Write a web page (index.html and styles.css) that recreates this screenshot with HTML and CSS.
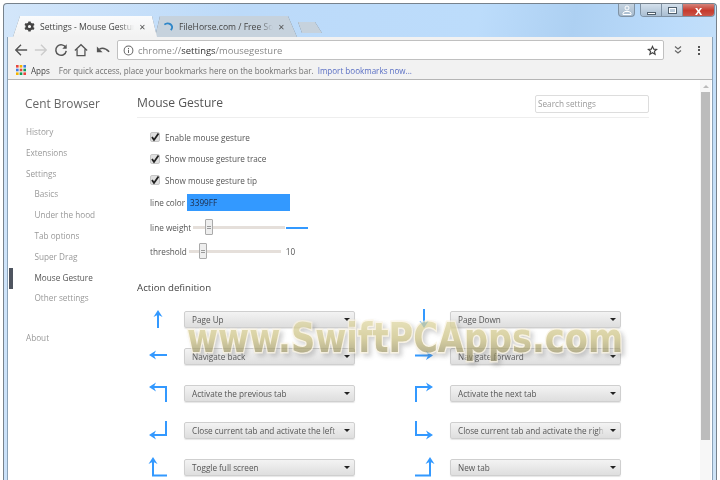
FILE: index.html
```html
<!doctype html>
<html>
  <head>
    <meta charset="UTF-8" />
    <title>Settings - Mouse Gesture</title>
    <link rel="stylesheet" href="styles.css">
  </head>
  <body>
    <div class="window">
      <!-- caption -->
      <div class="caption">
        <div class="tabs">
          <div class="tab tab-active">
            <svg class="tab-icon" viewBox="0 0 24 24" fill="#444"><path d="M20.500 13.500a8.500 8.500 0 0 0 0-3l2.500-2-2.500-4.300-3 1.200a8.500 8.500 0 0 0-2.500-1.500L14.500 1h-5L9 3.900a8.500 8.500 0 0 0-2.500 1.500l-3-1.200L1 8.500l2.500 2a8.500 8.500 0 0 0 0 3l-2.500 2 2.500 4.300 3-1.200A8.500 8.500 0 0 0 9 20.100l.5 2.900h5l.5-2.900a8.500 8.500 0 0 0 2.500-1.500l3 1.200 2.500-4.300ZM12 15.500a3.500 3.500 0 1 1 0-7 3.500 3.500 0 0 1 0 7Z"/></svg>
            <span class="tab-title">Settings - Mouse Gesture</span>
            <span class="tab-close">&#x2715;</span>
          </div>
          <div class="tab tab-back">
            <svg class="tab-icon" viewBox="0 0 24 24" fill="none" stroke="#2f86c8" stroke-width="4"><path d="M3 8a10 9 0 0 1 17 5q0 4-3 7"/></svg>
            <span class="tab-title">FileHorse.com / Free Software Download</span>
            <span class="tab-close">&#x2715;</span>
          </div>
          <div class="tab-new"></div>
        </div>
        <div class="caption-buttons">
          <div class="caption-user">
            <svg viewBox="0 0 12 10" width="12" height="10" fill="none" stroke="#fff" stroke-width="1"><circle cx="6" cy="3" r="2"/><path d="M2 9.500V8l2-1.500h4L10 8v1.500Z"/></svg>
          </div>
          <div class="caption-group">
            <div class="caption-min"><span class="min-bar"></span></div>
            <div class="caption-max"><span class="max-box"></span></div>
            <div class="caption-close">x</div>
          </div>
        </div>
      </div>

      <div class="frame">
        <!-- toolbar -->
        <div class="toolbar">
          <svg class="tool" viewBox="0 0 16 16" fill="none" stroke="#555" stroke-width="1.600"><path d="M15 8H2M8 2 2 8l6 6"/></svg>
          <svg class="tool" viewBox="0 0 16 16" fill="none" stroke="#ccc" stroke-width="1.600"><path d="M1 8h13M8 2l6 6-6 6"/></svg>
          <svg class="tool" viewBox="0 0 16 16" fill="none" stroke="#555" stroke-width="1.700"><path d="M13.500 5.500A6 6 0 1 0 14 9"/><path d="M14.500 1.500v5h-5" fill="#555" stroke="none"/></svg>
          <svg class="tool" viewBox="0 0 16 16" fill="none" stroke="#555" stroke-width="1.500"><path d="M1 8.500 8 2l7 6.500M3.500 7v7.500h9V7"/></svg>
          <svg class="tool tool-undo" viewBox="0 0 16 16" fill="none" stroke="#555" stroke-width="1.900"><path d="M4 7q5-3 11 3"/><path d="M1 4v6.500h6.500Z" fill="#555" stroke="none"/></svg>
          <div class="omnibox">
            <svg class="omni-info" viewBox="0 0 12 12" fill="none" stroke="#666" stroke-width="1.100"><circle cx="6" cy="6" r="4.800"/><path d="M6 5.200v3.600M6 3.200v1.100"/></svg>
            <span class="omni-url"><span class="omni-dim">chrome://</span>settings<span class="omni-dim">/mousegesture</span></span>
            <svg class="omni-star" viewBox="0 0 16 16" fill="none" stroke="#444" stroke-width="1.700"><path d="m8 2 1.800 4 4.200.4-3.200 2.800 1 4.300L8 11.300l-3.800 2.200 1-4.300L2 6.400 6.200 6Z"/></svg>
          </div>
          <svg class="tool-small" viewBox="0 0 10 10" fill="none" stroke="#666" stroke-width="1.200"><path d="m2 1.500 3 2.500 3-2.500M2 5.500 5 8l3-2.500"/></svg>
          <div class="menu-dots"><span></span><span></span><span></span></div>
        </div>
        <!-- bookmarks -->
        <div class="bookmarks">
          <svg class="apps-icon" viewBox="0 0 10 10">
            <rect width="2.600" height="2.600" fill="#e8453c"/><rect x="3.700" width="2.600" height="2.600" fill="#f4b400"/><rect x="7.400" width="2.600" height="2.600" fill="#3f7de0"/>
            <rect y="3.700" width="2.600" height="2.600" fill="#3f7de0"/><rect x="3.700" y="3.700" width="2.600" height="2.600" fill="#e8453c"/><rect x="7.400" y="3.700" width="2.600" height="2.600" fill="#0f9d58"/>
            <rect y="7.400" width="2.600" height="2.600" fill="#f4b400"/><rect x="3.700" y="7.400" width="2.600" height="2.600" fill="#0f9d58"/><rect x="7.400" y="7.400" width="2.600" height="2.600" fill="#e8453c"/>
          </svg>
          <span class="apps-label">Apps</span>
          <span class="bookmarks-hint">For quick access, place your bookmarks here on the bookmarks bar.</span>
          <span class="bookmarks-link">Import bookmarks now...</span>
        </div>

        <div class="page">
          <!-- sidebar -->
          <div class="sidebar">
            <div class="sidebar-title">Cent Browser</div>
            <ul class="nav">
              <li>History</li>
              <li>Extensions</li>
              <li>Settings</li>
              <li class="nav-sub">Basics</li>
              <li class="nav-sub">Under the hood</li>
              <li class="nav-sub">Tab options</li>
              <li class="nav-sub">Super Drag</li>
              <li class="nav-sub nav-selected">Mouse Gesture</li>
              <li class="nav-sub">Other settings</li>
              <li class="nav-about">About</li>
            </ul>
          </div>

          <!-- main -->
          <div class="main">
            <div class="main-header">
              <div class="main-title">Mouse Gesture</div>
              <div class="search">Search settings</div>
            </div>

            <div class="options">
              <div class="check-row"><span class="check"><svg viewBox="0 0 10 10"><path d="M2 5l2 3 4.500-6.500" fill="none" stroke="#222" stroke-width="1.800"/></svg></span>Enable mouse gesture</div>
              <div class="check-row"><span class="check"><svg viewBox="0 0 10 10"><path d="M2 5l2 3 4.500-6.500" fill="none" stroke="#222" stroke-width="1.800"/></svg></span>Show mouse gesture trace</div>
              <div class="check-row"><span class="check"><svg viewBox="0 0 10 10"><path d="M2 5l2 3 4.500-6.500" fill="none" stroke="#222" stroke-width="1.800"/></svg></span>Show mouse gesture tip</div>
              <div class="color-row">
                <span>line color</span>
                <div class="color-value">3399FF</div>
              </div>
              <div class="slider-row">
                <span>line weight</span>
                <div class="slider slider-weight"><span class="thumb"></span></div>
                <span class="weight-preview"></span>
              </div>
              <div class="slider-row">
                <span>threshold</span>
                <div class="slider slider-threshold"><span class="thumb"></span></div>
                <span class="slider-value">10</span>
              </div>
            </div>

            <div class="section-title">Action definition</div>

            <div class="actions">
              <svg class="arrow" viewBox="0 0 20 24"><path class="arrow-line" d="M10 21V6"/><path class="arrow-head" d="M10 3l4.500 7-4.500-2.200L5.500 10Z"/></svg>
              <div class="select"><span class="select-text">Page Up</span><span class="select-caret"></span></div>
              <svg class="arrow" viewBox="0 0 20 24"><path class="arrow-line" d="M10 2v16"/><path class="arrow-head" d="M10 21l-4.500-7 4.500 2.200 4.500-2.200Z"/></svg>
              <div class="select"><span class="select-text">Page Down</span><span class="select-caret"></span></div>

              <svg class="arrow" viewBox="0 0 20 24"><path class="arrow-line" d="M19 11H4"/><path class="arrow-head" d="M1 11l7-4.500L5.800 11 8 15.500Z"/></svg>
              <div class="select"><span class="select-text">Navigate back</span><span class="select-caret"></span></div>
              <svg class="arrow" viewBox="0 0 20 24"><path class="arrow-line" d="M1 11.500h15"/><path class="arrow-head" d="M19 11.500 12 7l2.200 4.500L12 16Z"/></svg>
              <div class="select"><span class="select-text">Navigate forward</span><span class="select-caret"></span></div>

              <svg class="arrow" viewBox="0 0 20 24"><path class="arrow-line" d="M18 21V6H4"/><path class="arrow-head" d="M1 6l7-4.500L5.800 6 8 10.500Z"/></svg>
              <div class="select"><span class="select-text">Activate the previous tab</span><span class="select-caret"></span></div>
              <svg class="arrow" viewBox="0 0 20 24"><path class="arrow-line" d="M2 21V6h14"/><path class="arrow-head" d="M19 6 12 1.500 14.200 6 12 10.500Z"/></svg>
              <div class="select"><span class="select-text">Activate the next tab</span><span class="select-caret"></span></div>

              <svg class="arrow" viewBox="0 0 20 24"><path class="arrow-line" d="M18 3v14H4"/><path class="arrow-head" d="M1 17l7-4.500L5.800 17 8 21.500Z"/></svg>
              <div class="select"><span class="select-text select-fade">Close current tab and activate the left one</span><span class="select-caret"></span></div>
              <svg class="arrow" viewBox="0 0 20 24"><path class="arrow-line" d="M2 3v14h14"/><path class="arrow-head" d="M19 17l-7-4.500 2.200 4.500-2.200 4.500Z"/></svg>
              <div class="select"><span class="select-text select-fade">Close current tab and activate the right one</span><span class="select-caret"></span></div>

              <svg class="arrow" viewBox="0 0 20 24"><path class="arrow-line" d="M5 5v15.500h14"/><path class="arrow-head" d="M5 2l4.500 7L5 6.800.5 9Z"/></svg>
              <div class="select"><span class="select-text">Toggle full screen</span><span class="select-caret"></span></div>
              <svg class="arrow" viewBox="0 0 20 24"><path class="arrow-line" d="M1 20.500h15V5"/><path class="arrow-head" d="M16 2l4.500 7-4.500-2.200L11.500 9Z"/></svg>
              <div class="select"><span class="select-text">New tab</span><span class="select-caret"></span></div>
            </div>
          </div>

          <!-- scrollbar -->
          <div class="scrollbar">
            <span class="scroll-arrow"></span>
            <div class="scroll-thumb"></div>
          </div>
        </div>
      </div>
    </div>

    <!-- watermark -->
    <svg class="watermark" viewBox="0 0 450 70">
      <defs>
        <linearGradient id="wm-fill" x1="0" y1="0" x2="0" y2="1">
          <stop offset="0" stop-color="#e6dfae"/>
          <stop offset="0.5" stop-color="#cbc184"/>
          <stop offset="1" stop-color="#86805c"/>
        </linearGradient>
      </defs>
      <text class="watermark-text" x="3" y="49" textLength="436" lengthAdjust="spacingAndGlyphs">www.SwiftPCApps.com</text>
    </svg>
  </body>
</html>
```

FILE: styles.css
```css
body {
  margin: 0;
  width: 720px;
  height: 480px;
  overflow: hidden;
  position: relative;
  background: #fff;
  font-family: 'Open Sans', 'Noto Sans', sans-serif;
  font-size: 8.2px;
  color: #555;
}

/* start */
.window {
  margin: 3px 3px 0 3px;
  height: 477px;
  box-sizing: border-box;
  display: flex;
  flex-direction: column;
  border: 1px solid #77828c;
  border-bottom: none;
  border-radius: 4px 4px 0 0;
  overflow: hidden;
  background: linear-gradient(100deg, #d3e6fa 0%, #bcdaf9 30%, #bcdcfb 60%, #add0f2 72%, #bcdcfb 85%, #cfe4f7 100%);
  filter: blur(0.45px);
}

/* caption */
.caption {
  height: 33px;
  flex: none;
  display: flex;
  justify-content: space-between;
  align-items: flex-start;
  padding: 0 1px 0 9px;
}
.tabs {
  align-self: flex-end;
  display: flex;
  align-items: flex-end;
  filter: drop-shadow(0 0 0.6px #5f7282);
}
.tab {
  height: 21px;
  box-sizing: border-box;
  display: flex;
  align-items: center;
  font-size: 8.6px;
  color: #444;
}
.tab-active {
  width: 144px;
  margin-right: -2px;
  padding: 0 11px;
  background: linear-gradient(#fafbfc, #f2f2f2);
  clip-path: polygon(0 100%, 7px 0, 139px 0, 100% 100%);
  position: relative;
  z-index: 1;
}
.tab-back {
  width: 142px;
  padding: 0 12px 0 8px;
  background: #c6d2dd;
  clip-path: polygon(0 100%, 5px 0, 133px 0, 100% 100%);
}
.tab-icon {
  width: 11px;
  height: 11px;
  flex: none;
  margin-right: 5px;
}
.tab-title {
  flex: 1;
  min-width: 0;
  overflow: hidden;
  white-space: nowrap;
  -webkit-mask-image: linear-gradient(to right, #000 85%, transparent 100%);
}
.tab-close {
  flex: none;
  font-size: 8px;
  margin-left: 5px;
  color: #555;
}
.tab-new {
  width: 24px;
  height: 11px;
  margin-left: 1px;
  margin-bottom: 4px;
  background: #c6d2dd;
  clip-path: polygon(4px 100%, 0 0, 17px 0, 100% 100%);
}

.caption-buttons {
  display: flex;
  gap: 5px;
}
.caption-user {
  width: 17px;
  height: 13px;
  display: flex;
  align-items: center;
  justify-content: center;
  border: 1px solid #7f92a4;
  border-top: none;
  box-sizing: border-box;
  border-radius: 0 0 4px 4px;
  background: linear-gradient(#c5d3e0, #a6bacd);
}
.caption-group {
  display: flex;
  height: 13px;
  border: 1px solid #7f92a4;
  border-top: none;
  box-sizing: border-box;
  border-radius: 0 0 4px 4px;
  overflow: hidden;
}
.caption-min,
.caption-max {
  width: 20px;
  display: flex;
  align-items: center;
  justify-content: center;
  background: linear-gradient(#d3e0ec, #a9bed2);
  border-right: 1px solid #7f92a4;
}
.min-bar {
  width: 9px;
  height: 3px;
  margin-top: 6px;
  background: #fff;
  border: 1px solid #50606e;
  box-sizing: border-box;
}
.max-box {
  width: 9px;
  height: 7px;
  border: 2px solid #fff;
  outline: 1px solid #50606e;
  outline-offset: -1px;
  box-sizing: border-box;
}
.caption-close {
  width: 31px;
  display: flex;
  align-items: center;
  justify-content: center;
  background: linear-gradient(#d5837a, #c63a2d 55%, #c9564a);
  color: #fff;
  font-family: 'Liberation Sans', sans-serif;
  font-size: 13px;
  font-weight: 700;
  line-height: 1;
}

/* frame */
.frame {
  flex: 1;
  min-height: 0;
  display: flex;
  flex-direction: column;
  margin: 0 3px;
  border: 1px solid #8ba3b9;
  border-bottom: none;
  border-top: none;
  background: #fff;
}

/* toolbar */
.toolbar {
  height: 24px;
  flex: none;
  box-sizing: border-box;
  display: flex;
  align-items: center;
  padding: 2px 0 0 6px;
  background: #f2f2f2;
}
.tool {
  width: 14px;
  height: 14px;
  flex: none;
  margin-right: 6px;
}
.tool-undo {
  margin-right: 0;
  margin-left: 2px;
}
.omnibox {
  width: 547px;
  height: 20px;
  margin-left: 7px;
  box-sizing: border-box;
  display: flex;
  align-items: center;
  padding: 0 5px;
  background: #fff;
  border: 1px solid #c0c0c0;
  border-radius: 2px;
  font-size: 9.45px;
  color: #333;
}
.omni-info {
  width: 11px;
  height: 11px;
  flex: none;
  margin-right: 4px;
}
.omni-url {
  flex: 1;
  white-space: nowrap;
}
.omni-dim {
  color: #888;
}
.omni-star {
  width: 11px;
  height: 11px;
  flex: none;
}
.tool-small {
  width: 10px;
  height: 10px;
  flex: none;
  margin-left: 9px;
}
.menu-dots {
  margin-left: 15px;
  display: flex;
  flex-direction: column;
  gap: 1.500px;
}
.menu-dots span {
  width: 2px;
  height: 2px;
  background: #555;
}

/* bookmarks */
.bookmarks {
  height: 19px;
  flex: none;
  box-sizing: border-box;
  display: flex;
  align-items: center;
  padding-left: 8px;
  background: #f2f2f2;
  border-bottom: 1px solid #b5b5b5;
  white-space: nowrap;
  font-size: 8.05px;
  color: #707070;
}
.apps-icon {
  width: 10px;
  height: 10px;
  flex: none;
  margin-right: 5px;
}
.apps-label {
  color: #444;
  margin-right: 9px;
}
.bookmarks-link {
  color: #5a6fc4;
  margin-left: 4px;
}

/* page */
.page {
  flex: 1;
  min-height: 0;
  display: flex;
  background: #fff;
}

/* sidebar */
.sidebar {
  width: 129px;
  flex: none;
  padding: 14px 0 0 17px;
  box-sizing: border-box;
  position: relative;
}
.sidebar-title {
  font-size: 11.9px;
  line-height: 18px;
  color: #666;
}
.nav {
  list-style: none;
  margin: 10px 0 0 0;
  padding: 0;
  color: #999;
}
.nav li {
  height: 20.800px;
  line-height: 20.800px;
  padding-left: 1px;
}
.nav .nav-sub {
  padding-left: 9.500px;
}
.nav .nav-selected {
  color: #555;
}
.nav-selected::before {
  content: '';
  position: absolute;
  left: 1px;
  width: 4px;
  height: 21px;
  background: #4f5560;
}
.nav .nav-about {
  margin-top: 18.500px;
}

/* main */
.main {
  flex: 1;
  min-width: 0;
  padding-right: 51px;
}
.main-header {
  height: 38px;
  box-sizing: border-box;
  display: flex;
  justify-content: space-between;
  align-items: flex-start;
  padding-top: 14px;
  border-bottom: 1px solid #eee;
}
.main-title {
  font-size: 12.100px;
  line-height: 18px;
  color: #555;
}
.search {
  width: 114px;
  height: 18px;
  margin-top: 1px;
  box-sizing: border-box;
  padding-left: 2px;
  line-height: 16px;
  color: #999;
  border: 1px solid #ddd;
  border-radius: 2px;
}
.options {
  margin-top: 8.500px;
  padding-left: 13px;
}
.check-row {
  height: 21.500px;
  display: flex;
  align-items: center;
}
.check {
  width: 10px;
  height: 10px;
  flex: none;
  margin-right: 5px;
  box-sizing: border-box;
  background: #e0e0e0;
  border: 1px solid #c6c6c6;
  border-radius: 2px;
}
.check svg {
  display: block;
  width: 10px;
  height: 10px;
  margin: -1px;
}
.color-row {
  margin-top: 3px;
  height: 17px;
  display: flex;
  align-items: center;
}
.color-value {
  width: 103px;
  height: 17px;
  margin-left: 2px;
  padding-left: 3px;
  box-sizing: border-box;
  line-height: 17px;
  background: #3399ff;
  color: #1d2a44;
}
.slider-row {
  height: 24px;
  display: flex;
  align-items: center;
}
.color-row + .slider-row {
  margin-top: 4.500px;
}
.slider {
  width: 92px;
  height: 3px;
  margin-left: 2px;
  background: #e5dfda;
  position: relative;
}
.thumb {
  position: absolute;
  top: -7px;
  width: 8px;
  height: 16px;
  box-sizing: border-box;
  background: repeating-linear-gradient(#eee 0 1px, #9a9a9a 1px 2px) center / 4px 5px no-repeat, #eee;
  border: 1px solid #aaa;
  border-radius: 1px;
}
.slider-weight .thumb {
  left: 12px;
}
.slider-threshold .thumb {
  left: 10px;
}
.weight-preview {
  width: 22px;
  height: 2px;
  margin-left: 1px;
  background: #3399ff;
}
.slider-value {
  margin-left: 5px;
}
.section-title {
  margin-top: 16.500px;
  height: 16px;
  line-height: 16px;
  font-size: 9.700px;
  color: #444;
}

/* actions */
.actions {
  margin-top: 4.500px;
  display: grid;
  grid-template-columns: 47px 171px 95px 171px;
  grid-auto-rows: 37px;
  align-items: center;
}
.arrow {
  width: 20px;
  height: 24px;
  justify-self: end;
  margin-right: 16px;
  overflow: visible;
}
.arrow-line {
  fill: none;
  stroke: #3399ff;
  stroke-width: 2;
}
.arrow-head {
  fill: #3399ff;
}
.select {
  height: 17px;
  box-sizing: border-box;
  display: flex;
  align-items: center;
  padding: 0 4px 0 7px;
  background: linear-gradient(#f3f3f3, #dedede);
  border: 1px solid #cfcfcf;
  border-radius: 2px;
  box-shadow: 0 1px 1px rgba(0, 0, 0, 0.1);
}
.select-text {
  flex: 1;
  min-width: 0;
  overflow: hidden;
  white-space: nowrap;
}
.select-fade {
  -webkit-mask-image: linear-gradient(to right, #000 96%, transparent 100%);
}
.select-caret {
  flex: none;
  margin-left: 6px;
  border-top: 3px solid #222;
  border-left: 3px solid transparent;
  border-right: 3px solid transparent;
}

/* scrollbar */
.scrollbar {
  width: 11px;
  flex: none;
  margin-right: 1px;
  background: #f7f7f7;
  display: flex;
  flex-direction: column;
  align-items: center;
}
.scroll-arrow {
  margin-top: 5px;
  border-bottom: 3px solid #bbb;
  border-left: 3px solid transparent;
  border-right: 3px solid transparent;
}
.scroll-thumb {
  width: 9px;
  height: 348px;
  margin-top: 4px;
  background: #bcbcbc;
}

/* watermark */
.watermark {
  position: absolute;
  left: 184px;
  top: 303px;
  width: 450px;
  height: 70px;
}
.watermark-text {
  font-family: 'DejaVu Sans', sans-serif;
  font-size: 41px;
  font-weight: 700;
  fill: url(#wm-fill);
  stroke: rgba(250, 242, 222, 0.9);
  stroke-width: 3px;
  paint-order: stroke fill;
  opacity: 0.75;
  filter: drop-shadow(3px 3px 2px rgba(120, 120, 120, 0.45));
}
```
